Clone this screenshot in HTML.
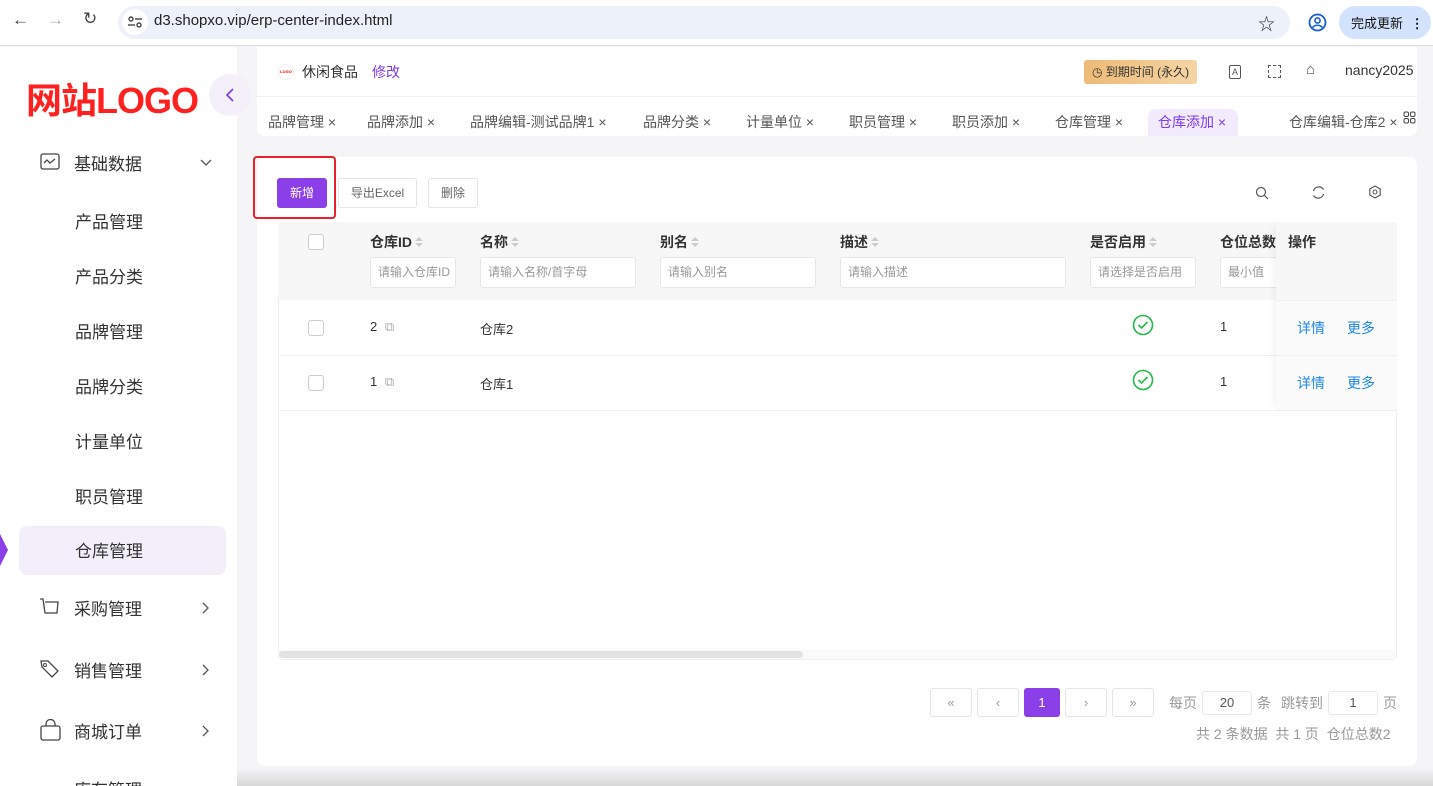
<!DOCTYPE html>
<html style="overflow:hidden;height:786px"><head><meta charset="utf-8"><style>
*{box-sizing:border-box;margin:0;padding:0}
body{width:1433px;height:786px;overflow:hidden;font-family:"Liberation Sans","Noto Sans CJK SC",sans-serif;background:#f5f5f7;position:relative;color:#333;font-size:14px}
.abs{position:absolute}
.top{left:0;top:0;width:1433px;height:46px;background:#fff;border-bottom:1px solid #ddd}
.url{left:118px;top:6px;width:1172px;height:33px;background:#edf1fa;border-radius:17px}
.side{left:0;top:47px;width:237px;height:739px;background:#fff}
.mi{position:absolute;left:75px;font-size:17px;color:#333}
.mg{position:absolute;left:74px;font-size:17px;color:#333}
.arr{position:absolute;left:200px;font-size:14px;color:#555}
.hdr{left:257px;top:47px;width:1160px;height:89px;background:#fff;border-radius:0 0 8px 8px}
.tab{position:absolute;top:112px;font-size:14px;color:#555}
.card{left:257px;top:157px;width:1160px;height:609px;background:#fff;border-radius:8px}
.btn{position:absolute;top:178px;height:30px;border:1px solid #e5e5e5;border-radius:3px;font-size:12px;color:#666;text-align:center;line-height:28px;background:#fff}
.th{position:absolute;top:232px;font-size:14px;color:#333;font-weight:bold}
.srt{display:inline-block;width:0;height:0;margin-left:3px;vertical-align:middle;border-left:4px solid transparent;border-right:4px solid transparent;border-bottom:4px solid #ccc;position:relative;top:-4px}
.srt:after{content:"";position:absolute;left:-4px;top:6px;border-left:4px solid transparent;border-right:4px solid transparent;border-top:4px solid #ccc}
.inp{position:absolute;top:257px;height:31px;background:#fff;border:1px solid #e8e8e8;border-radius:3px;font-size:12px;color:#999;padding-left:7px;line-height:29px;overflow:hidden;white-space:nowrap}
.cb{position:absolute;left:308px;width:16px;height:16px;border:1px solid #ccc;border-radius:3px;background:#fff}
.td{position:absolute;font-size:13px;color:#333}
.lk{position:absolute;font-size:14px;color:#1e88e5}
.pg{position:absolute;top:688px;height:29px;border:1px solid #e5e5e5;border-radius:3px;text-align:center;line-height:27px;color:#999;font-size:13px;background:#fff}
.gr{position:absolute;font-size:14px;color:#999}
</style></head><body>
<div class="abs top"></div>
<div class="abs" style="left:12px;top:10px;font-size:17px;color:#444">←</div>
<div class="abs" style="left:47px;top:10px;font-size:17px;color:#aaa">→</div>
<div class="abs" style="left:83px;top:9px;font-size:17px;color:#444">↻</div>
<div class="abs url"></div>
<div class="abs" style="left:122px;top:9px;width:26px;height:26px;border-radius:13px;background:#fff"></div>
<svg class="abs" style="left:127px;top:15px" width="16" height="14"><circle cx="4" cy="4" r="2" fill="none" stroke="#444" stroke-width="1.4"/><line x1="8" y1="4" x2="15" y2="4" stroke="#444" stroke-width="1.4"/><circle cx="12" cy="10" r="2" fill="none" stroke="#444" stroke-width="1.4"/><line x1="1" y1="10" x2="8" y2="10" stroke="#444" stroke-width="1.4"/></svg>
<div class="abs" style="left:154px;top:12px;font-size:15px;color:#222">d3.shopxo.vip/erp-center-index.html</div>
<div class="abs" style="left:1258px;top:10px;font-size:17px;color:#333">☆</div>
<svg class="abs" style="left:1308px;top:13px" width="19" height="19"><circle cx="9.5" cy="9.5" r="8" fill="none" stroke="#1a5fd0" stroke-width="1.8"/><circle cx="9.5" cy="7.5" r="2.6" fill="none" stroke="#1a5fd0" stroke-width="1.6"/><path d="M4.5 14.5c2.5-3 7.5-3 10 0" fill="none" stroke="#1a5fd0" stroke-width="1.6"/></svg>
<div class="abs" style="left:1339px;top:6px;width:92px;height:33px;border-radius:17px;background:#d3e3fd"></div>
<div class="abs" style="left:1351px;top:13px;font-size:13px;color:#111">完成更新 <b style="margin-left:4px">⋮</b></div>

<div class="abs side"></div>
<div class="abs" style="left:26px;top:72px;font-size:36px;font-weight:bold;color:#ff2020;letter-spacing:-1px">网站LOGO</div>
<div class="abs" style="left:209px;top:74px;width:42px;height:42px;border-radius:21px;background:#f3f0fa"></div>
<svg class="abs" style="left:224px;top:87px" width="12" height="16"><path d="M9 2L3 8l6 6" fill="none" stroke="#7c3aed" stroke-width="1.6"/></svg>
<svg class="abs" style="left:40px;top:153px" width="20" height="17"><rect x="1" y="1" width="18" height="15" rx="2" fill="none" stroke="#444" stroke-width="1.3"/><path d="M4 10l3-3 3 3 5-4" fill="none" stroke="#444" stroke-width="1.3"/></svg>
<div class="mg" style="top:150px">基础数据</div>
<svg class="abs" style="left:200px;top:159px" width="12" height="8"><path d="M1 1l5 5 5-5" fill="none" stroke="#555" stroke-width="1.3"/></svg>
<div class="mi" style="top:208px">产品管理</div>
<div class="mi" style="top:263px">产品分类</div>
<div class="mi" style="top:318px">品牌管理</div>
<div class="mi" style="top:373px">品牌分类</div>
<div class="mi" style="top:428px">计量单位</div>
<div class="mi" style="top:483px">职员管理</div>
<div class="abs" style="left:19px;top:526px;width:207px;height:49px;background:#f2effa;border-radius:8px"></div>
<div class="abs" style="left:-8px;top:534px;width:16px;height:32px;background:#8b3fe8;clip-path:polygon(0 0,50% 0,100% 50%,50% 100%,0 100%)"></div>
<div class="mi" style="top:537px">仓库管理</div>
<svg class="abs" style="left:38px;top:597px" width="22" height="20"><path d="M2 2h3l2 14h12l1-11H7" fill="none" stroke="#444" stroke-width="1.3"/></svg>
<div class="mg" style="top:595px">采购管理</div>
<svg class="abs" style="left:202px;top:602px" width="8" height="12"><path d="M1 1l5 5-5 5" fill="none" stroke="#555" stroke-width="1.3"/></svg>
<svg class="abs" style="left:39px;top:658px" width="22" height="22"><path d="M2 3l1 6 10 10 6-6L9 3z" fill="none" stroke="#444" stroke-width="1.3"/><circle cx="6" cy="7" r="1.5" fill="none" stroke="#444"/></svg>
<div class="mg" style="top:657px">销售管理</div>
<svg class="abs" style="left:202px;top:664px" width="8" height="12"><path d="M1 1l5 5-5 5" fill="none" stroke="#555" stroke-width="1.3"/></svg>
<svg class="abs" style="left:40px;top:719px" width="21" height="22"><rect x="1" y="7" width="19" height="14" rx="2" fill="none" stroke="#444" stroke-width="1.3"/><path d="M6 7V5a4.5 4.5 0 0 1 9 0v2" fill="none" stroke="#444" stroke-width="1.3"/></svg>
<div class="mg" style="top:718px">商城订单</div>
<svg class="abs" style="left:202px;top:725px" width="8" height="12"><path d="M1 1l5 5-5 5" fill="none" stroke="#555" stroke-width="1.3"/></svg>
<div class="mg" style="top:776px">库存管理</div>

<div class="abs hdr"></div>
<div class="abs" style="left:257px;top:96px;width:1160px;height:1px;background:#f0f0f0"></div>
<div class="abs" style="left:278px;top:64px;width:16px;height:16px;border-radius:8px;border:1px solid #eee;font-size:4px;color:#e00;text-align:center;line-height:14px;font-weight:bold">LOGO</div>
<div class="abs" style="left:302px;top:62px;font-size:14px;color:#333">休闲食品</div>
<div class="abs" style="left:372px;top:62px;font-size:14px;color:#7c3aed">修改</div>
<div class="abs" style="left:1084px;top:60px;width:113px;height:24px;border-radius:3px;background:linear-gradient(90deg,#eebb77,#f5d5a5);font-size:12px;color:#333;line-height:24px;padding-left:8px">◷ 到期时间 (永久)</div>
<div class="abs" style="left:1229px;top:65px;width:12px;height:14px;border:1px solid #555;border-radius:2px;font-size:9px;text-align:center;line-height:12px;color:#555">A</div>
<div class="abs" style="left:1268px;top:65px;width:13px;height:13px;border:1.5px dashed #555"></div>
<div class="abs" style="left:1306px;top:61px;font-size:15px;color:#555">⌂</div>
<div class="abs" style="left:1345px;top:62px;font-size:14px;color:#333">nancy2025</div>
<div class="abs" style="left:1148px;top:109px;width:90px;height:27px;background:#f1ebfd;border-radius:8px 8px 0 0"></div>
<div class="tab" style="left:268px">品牌管理 ×</div>
<div class="tab" style="left:367px">品牌添加 ×</div>
<div class="tab" style="left:470px">品牌编辑-测试品牌1 ×</div>
<div class="tab" style="left:643px">品牌分类 ×</div>
<div class="tab" style="left:746px">计量单位 ×</div>
<div class="tab" style="left:849px">职员管理 ×</div>
<div class="tab" style="left:952px">职员添加 ×</div>
<div class="tab" style="left:1055px">仓库管理 ×</div>
<div class="tab" style="left:1158px;color:#7c3aed">仓库添加 ×</div>
<div class="tab" style="left:1289px">仓库编辑-仓库2 ×</div>
<svg class="abs" style="left:1403px;top:111px" width="13" height="13"><rect x="1" y="1" width="4.5" height="4.5" rx="1.5" fill="none" stroke="#444"/><rect x="7.5" y="1" width="4.5" height="4.5" rx="1.5" fill="none" stroke="#444"/><rect x="1" y="7.5" width="4.5" height="4.5" rx="1.5" fill="none" stroke="#444"/><rect x="7.5" y="7.5" width="4.5" height="4.5" rx="1.5" fill="none" stroke="#444"/></svg>

<div class="abs card"></div>
<div class="abs" style="left:253px;top:156px;width:83px;height:63px;border:2px solid #e8202a;border-radius:4px"></div>
<div class="btn" style="left:277px;width:50px;background:#8b3fe8;border-color:#8b3fe8;color:#fff">新增</div>
<div class="btn" style="left:338px;width:79px">导出Excel</div>
<div class="btn" style="left:428px;width:50px">删除</div>
<svg class="abs" style="left:1255px;top:186px" width="14" height="14"><circle cx="6" cy="6" r="4.5" fill="none" stroke="#555" stroke-width="1.2"/><line x1="9.5" y1="9.5" x2="13" y2="13" stroke="#555" stroke-width="1.2"/></svg>
<svg class="abs" style="left:1311px;top:185px" width="15" height="15"><path d="M2.5 6a5.5 5.5 0 0 1 10-1.5M12.5 9a5.5 5.5 0 0 1-10 1.5" fill="none" stroke="#555" stroke-width="1.2"/></svg>
<svg class="abs" style="left:1368px;top:185px" width="14" height="14"><path d="M7 1l5.2 3v6L7 13l-5.2-3V4z" fill="none" stroke="#555" stroke-width="1.1"/><circle cx="7" cy="7" r="2" fill="none" stroke="#555" stroke-width="1.1"/></svg>

<div class="abs" style="left:278px;top:222px;width:1119px;height:438px;border:1px solid #f0f0f0;border-radius:4px"></div>
<div class="abs" style="left:278px;top:222px;width:1119px;height:78px;background:#f7f7f7;border-radius:4px 4px 0 0"></div>
<div class="abs" style="left:278px;top:355px;width:1119px;height:1px;background:#f0f0f0"></div>
<div class="abs" style="left:278px;top:410px;width:1119px;height:1px;background:#f0f0f0"></div>
<div class="cb" style="top:234px"></div>
<div class="th" style="left:370px">仓库ID<span class="srt"></span></div>
<div class="th" style="left:480px">名称<span class="srt"></span></div>
<div class="th" style="left:660px">别名<span class="srt"></span></div>
<div class="th" style="left:840px">描述<span class="srt"></span></div>
<div class="th" style="left:1090px">是否启用<span class="srt"></span></div>
<div class="th" style="left:1220px">仓位总数</div>
<div class="inp" style="left:370px;width:86px">请输入仓库ID</div>
<div class="inp" style="left:480px;width:156px">请输入名称/首字母</div>
<div class="inp" style="left:660px;width:156px">请输入别名</div>
<div class="inp" style="left:840px;width:226px">请输入描述</div>
<div class="inp" style="left:1090px;width:106px">请选择是否启用</div>
<div class="inp" style="left:1220px;width:70px">最小值</div>
<div class="abs" style="left:1276px;top:222px;width:121px;height:188px;background:#fafafa;box-shadow:-6px 0 8px -4px rgba(0,0,0,0.06)"></div>
<div class="abs" style="left:1276px;top:222px;width:121px;height:78px;background:#f7f7f7"></div>
<div class="abs" style="left:1276px;top:300px;width:121px;height:1px;background:#f0f0f0"></div>
<div class="abs" style="left:1276px;top:355px;width:121px;height:1px;background:#f0f0f0"></div>
<div class="th" style="left:1288px">操作</div>
<div class="cb" style="top:320px"></div>
<div class="td" style="left:370px;top:319px">2 <span style="color:#aaa;margin-left:4px">⧉</span></div>
<div class="td" style="left:480px;top:319px">仓库2</div>
<div class="td" style="left:1220px;top:319px">1</div>
<div class="lk" style="left:1297px;top:318px">详情</div><div class="lk" style="left:1347px;top:318px">更多</div>
<div class="cb" style="top:375px"></div>
<div class="td" style="left:370px;top:374px">1 <span style="color:#aaa;margin-left:4px">⧉</span></div>
<div class="td" style="left:480px;top:374px">仓库1</div>
<div class="td" style="left:1220px;top:374px">1</div>
<div class="lk" style="left:1297px;top:373px">详情</div><div class="lk" style="left:1347px;top:373px">更多</div>
<svg class="abs" style="left:1132px;top:314px" width="22" height="22"><circle cx="11" cy="11" r="9.5" fill="none" stroke="#22b84a" stroke-width="1.6"/><path d="M6.5 11l3 3 6-6" fill="none" stroke="#22b84a" stroke-width="1.6"/></svg>
<svg class="abs" style="left:1132px;top:369px" width="22" height="22"><circle cx="11" cy="11" r="9.5" fill="none" stroke="#22b84a" stroke-width="1.6"/><path d="M6.5 11l3 3 6-6" fill="none" stroke="#22b84a" stroke-width="1.6"/></svg>
<div class="abs" style="left:279px;top:650px;width:1117px;height:9px;background:#fafafa"></div>
<div class="abs" style="left:279px;top:651px;width:524px;height:7px;background:#e3e3e3;border-radius:4px"></div>

<div class="pg" style="left:930px;width:42px">«</div>
<div class="pg" style="left:977px;width:42px">‹</div>
<div class="pg" style="left:1024px;width:36px;background:#8b3fe8;border-color:#8b3fe8;color:#fff">1</div>
<div class="pg" style="left:1065px;width:42px">›</div>
<div class="pg" style="left:1112px;width:42px">»</div>
<div class="gr" style="left:1169px;top:693px">每页</div>
<div class="abs" style="left:1202px;top:691px;width:50px;height:24px;border:1px solid #e8e8e8;border-radius:3px;text-align:center;line-height:22px;font-size:13px;color:#555">20</div>
<div class="gr" style="left:1257px;top:693px">条</div>
<div class="gr" style="left:1281px;top:693px">跳转到</div>
<div class="abs" style="left:1328px;top:691px;width:50px;height:24px;border:1px solid #e8e8e8;border-radius:3px;text-align:center;line-height:22px;font-size:13px;color:#555">1</div>
<div class="gr" style="left:1383px;top:693px">页</div>
<div class="gr" style="left:1196px;top:724px">共 2 条数据 &nbsp;共 1 页 &nbsp;仓位总数2</div>
<div class="abs" style="left:237px;top:768px;width:1196px;height:18px;background:linear-gradient(#f5f5f7,#d8d8d8)"></div>
</body></html>
